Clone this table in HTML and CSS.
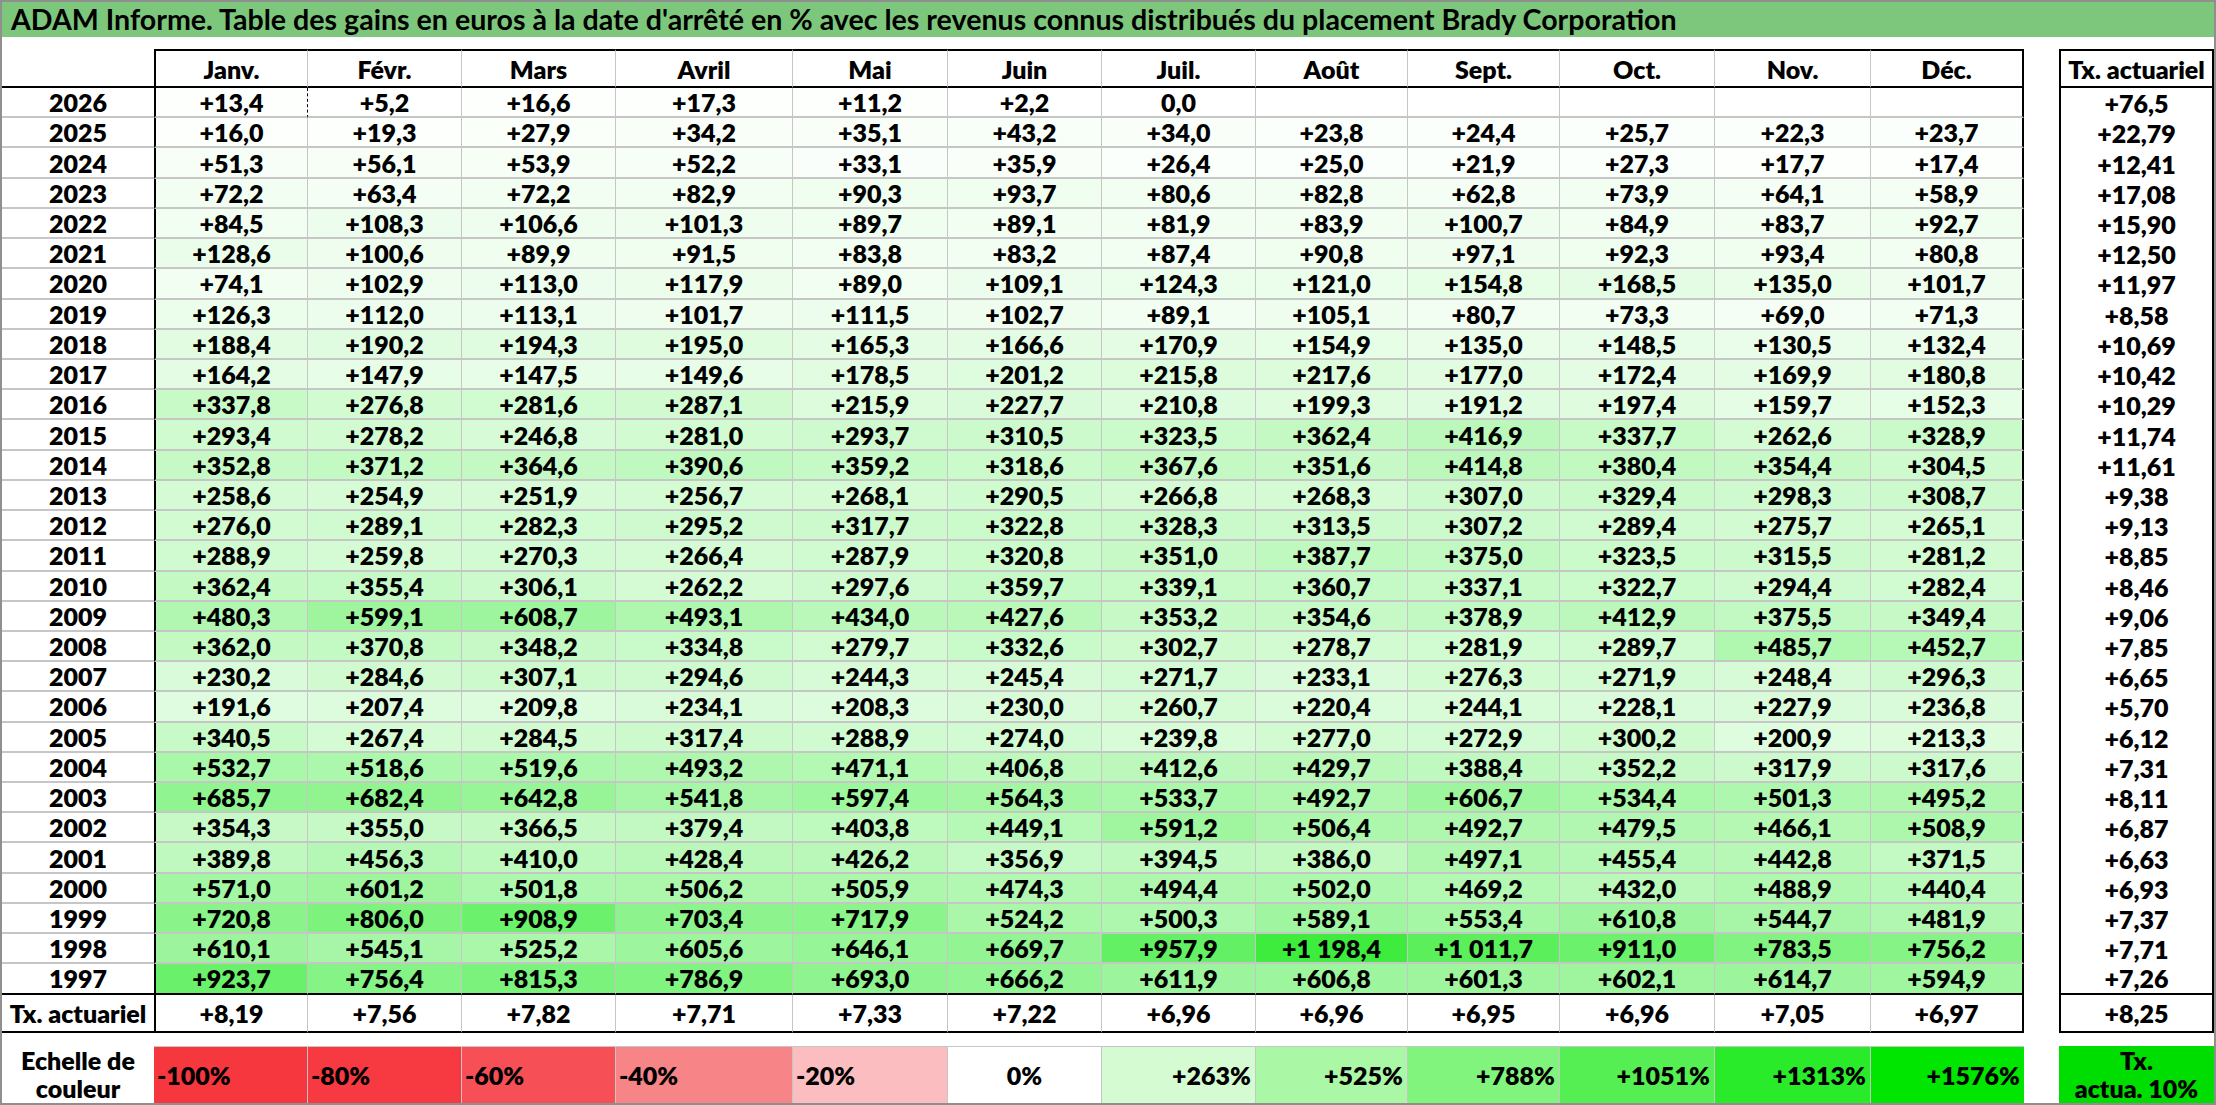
FILE: index.html
```html
<!DOCTYPE html>
<html lang="fr">
<head>
<meta charset="utf-8">
<title>ADAM Informe</title>
<link rel="stylesheet" href="styles.css">
</head>
<body>
<div class="sheet">
  <div class="title">ADAM Informe. Table des gains en euros à la date d'arrêté en % avec les revenus connus distribués du placement Brady Corporation</div>
  <div class="grid">
    <div class="row head">
      <div class="c y"></div>
      <div class="c m first">Janv.</div><div class="c m">Févr.</div><div class="c m">Mars</div><div class="c m">Avril</div><div class="c m">Mai</div><div class="c m">Juin</div><div class="c m">Juil.</div><div class="c m">Août</div><div class="c m">Sept.</div><div class="c m">Oct.</div><div class="c m">Nov.</div><div class="c m last">Déc.</div>
      <div class="c gap"></div><div class="c t">Tx. actuariel</div>
    </div>
    <div class="row data">
      <div class="c y">2026</div>
      <div class="c m v first dash">+13,4</div><div class="c m v">+5,2</div><div class="c m v">+16,6</div><div class="c m v">+17,3</div><div class="c m v">+11,2</div><div class="c m v">+2,2</div><div class="c m v">0,0</div><div class="c m v"></div><div class="c m v"></div><div class="c m v"></div><div class="c m v"></div><div class="c m v last"></div>
      <div class="c gap"></div><div class="c t">+76,5</div>
    </div>
    <div class="row data">
      <div class="c y">2025</div>
      <div class="c m v first">+16,0</div><div class="c m v">+19,3</div><div class="c m v">+27,9</div><div class="c m v">+34,2</div><div class="c m v">+35,1</div><div class="c m v">+43,2</div><div class="c m v">+34,0</div><div class="c m v">+23,8</div><div class="c m v">+24,4</div><div class="c m v">+25,7</div><div class="c m v">+22,3</div><div class="c m v last">+23,7</div>
      <div class="c gap"></div><div class="c t">+22,79</div>
    </div>
    <div class="row data">
      <div class="c y">2024</div>
      <div class="c m v first">+51,3</div><div class="c m v">+56,1</div><div class="c m v">+53,9</div><div class="c m v">+52,2</div><div class="c m v">+33,1</div><div class="c m v">+35,9</div><div class="c m v">+26,4</div><div class="c m v">+25,0</div><div class="c m v">+21,9</div><div class="c m v">+27,3</div><div class="c m v">+17,7</div><div class="c m v last">+17,4</div>
      <div class="c gap"></div><div class="c t">+12,41</div>
    </div>
    <div class="row data">
      <div class="c y">2023</div>
      <div class="c m v first">+72,2</div><div class="c m v">+63,4</div><div class="c m v">+72,2</div><div class="c m v">+82,9</div><div class="c m v">+90,3</div><div class="c m v">+93,7</div><div class="c m v">+80,6</div><div class="c m v">+82,8</div><div class="c m v">+62,8</div><div class="c m v">+73,9</div><div class="c m v">+64,1</div><div class="c m v last">+58,9</div>
      <div class="c gap"></div><div class="c t">+17,08</div>
    </div>
    <div class="row data">
      <div class="c y">2022</div>
      <div class="c m v first">+84,5</div><div class="c m v">+108,3</div><div class="c m v">+106,6</div><div class="c m v">+101,3</div><div class="c m v">+89,7</div><div class="c m v">+89,1</div><div class="c m v">+81,9</div><div class="c m v">+83,9</div><div class="c m v">+100,7</div><div class="c m v">+84,9</div><div class="c m v">+83,7</div><div class="c m v last">+92,7</div>
      <div class="c gap"></div><div class="c t">+15,90</div>
    </div>
    <div class="row data">
      <div class="c y">2021</div>
      <div class="c m v first">+128,6</div><div class="c m v">+100,6</div><div class="c m v">+89,9</div><div class="c m v">+91,5</div><div class="c m v">+83,8</div><div class="c m v">+83,2</div><div class="c m v">+87,4</div><div class="c m v">+90,8</div><div class="c m v">+97,1</div><div class="c m v">+92,3</div><div class="c m v">+93,4</div><div class="c m v last">+80,8</div>
      <div class="c gap"></div><div class="c t">+12,50</div>
    </div>
    <div class="row data">
      <div class="c y">2020</div>
      <div class="c m v first">+74,1</div><div class="c m v">+102,9</div><div class="c m v">+113,0</div><div class="c m v">+117,9</div><div class="c m v">+89,0</div><div class="c m v">+109,1</div><div class="c m v">+124,3</div><div class="c m v">+121,0</div><div class="c m v">+154,8</div><div class="c m v">+168,5</div><div class="c m v">+135,0</div><div class="c m v last">+101,7</div>
      <div class="c gap"></div><div class="c t">+11,97</div>
    </div>
    <div class="row data">
      <div class="c y">2019</div>
      <div class="c m v first">+126,3</div><div class="c m v">+112,0</div><div class="c m v">+113,1</div><div class="c m v">+101,7</div><div class="c m v">+111,5</div><div class="c m v">+102,7</div><div class="c m v">+89,1</div><div class="c m v">+105,1</div><div class="c m v">+80,7</div><div class="c m v">+73,3</div><div class="c m v">+69,0</div><div class="c m v last">+71,3</div>
      <div class="c gap"></div><div class="c t">+8,58</div>
    </div>
    <div class="row data">
      <div class="c y">2018</div>
      <div class="c m v first">+188,4</div><div class="c m v">+190,2</div><div class="c m v">+194,3</div><div class="c m v">+195,0</div><div class="c m v">+165,3</div><div class="c m v">+166,6</div><div class="c m v">+170,9</div><div class="c m v">+154,9</div><div class="c m v">+135,0</div><div class="c m v">+148,5</div><div class="c m v">+130,5</div><div class="c m v last">+132,4</div>
      <div class="c gap"></div><div class="c t">+10,69</div>
    </div>
    <div class="row data">
      <div class="c y">2017</div>
      <div class="c m v first">+164,2</div><div class="c m v">+147,9</div><div class="c m v">+147,5</div><div class="c m v">+149,6</div><div class="c m v">+178,5</div><div class="c m v">+201,2</div><div class="c m v">+215,8</div><div class="c m v">+217,6</div><div class="c m v">+177,0</div><div class="c m v">+172,4</div><div class="c m v">+169,9</div><div class="c m v last">+180,8</div>
      <div class="c gap"></div><div class="c t">+10,42</div>
    </div>
    <div class="row data">
      <div class="c y">2016</div>
      <div class="c m v first">+337,8</div><div class="c m v">+276,8</div><div class="c m v">+281,6</div><div class="c m v">+287,1</div><div class="c m v">+215,9</div><div class="c m v">+227,7</div><div class="c m v">+210,8</div><div class="c m v">+199,3</div><div class="c m v">+191,2</div><div class="c m v">+197,4</div><div class="c m v">+159,7</div><div class="c m v last">+152,3</div>
      <div class="c gap"></div><div class="c t">+10,29</div>
    </div>
    <div class="row data">
      <div class="c y">2015</div>
      <div class="c m v first">+293,4</div><div class="c m v">+278,2</div><div class="c m v">+246,8</div><div class="c m v">+281,0</div><div class="c m v">+293,7</div><div class="c m v">+310,5</div><div class="c m v">+323,5</div><div class="c m v">+362,4</div><div class="c m v">+416,9</div><div class="c m v">+337,7</div><div class="c m v">+262,6</div><div class="c m v last">+328,9</div>
      <div class="c gap"></div><div class="c t">+11,74</div>
    </div>
    <div class="row data">
      <div class="c y">2014</div>
      <div class="c m v first">+352,8</div><div class="c m v">+371,2</div><div class="c m v">+364,6</div><div class="c m v">+390,6</div><div class="c m v">+359,2</div><div class="c m v">+318,6</div><div class="c m v">+367,6</div><div class="c m v">+351,6</div><div class="c m v">+414,8</div><div class="c m v">+380,4</div><div class="c m v">+354,4</div><div class="c m v last">+304,5</div>
      <div class="c gap"></div><div class="c t">+11,61</div>
    </div>
    <div class="row data">
      <div class="c y">2013</div>
      <div class="c m v first">+258,6</div><div class="c m v">+254,9</div><div class="c m v">+251,9</div><div class="c m v">+256,7</div><div class="c m v">+268,1</div><div class="c m v">+290,5</div><div class="c m v">+266,8</div><div class="c m v">+268,3</div><div class="c m v">+307,0</div><div class="c m v">+329,4</div><div class="c m v">+298,3</div><div class="c m v last">+308,7</div>
      <div class="c gap"></div><div class="c t">+9,38</div>
    </div>
    <div class="row data">
      <div class="c y">2012</div>
      <div class="c m v first">+276,0</div><div class="c m v">+289,1</div><div class="c m v">+282,3</div><div class="c m v">+295,2</div><div class="c m v">+317,7</div><div class="c m v">+322,8</div><div class="c m v">+328,3</div><div class="c m v">+313,5</div><div class="c m v">+307,2</div><div class="c m v">+289,4</div><div class="c m v">+275,7</div><div class="c m v last">+265,1</div>
      <div class="c gap"></div><div class="c t">+9,13</div>
    </div>
    <div class="row data">
      <div class="c y">2011</div>
      <div class="c m v first">+288,9</div><div class="c m v">+259,8</div><div class="c m v">+270,3</div><div class="c m v">+266,4</div><div class="c m v">+287,9</div><div class="c m v">+320,8</div><div class="c m v">+351,0</div><div class="c m v">+387,7</div><div class="c m v">+375,0</div><div class="c m v">+323,5</div><div class="c m v">+315,5</div><div class="c m v last">+281,2</div>
      <div class="c gap"></div><div class="c t">+8,85</div>
    </div>
    <div class="row data">
      <div class="c y">2010</div>
      <div class="c m v first">+362,4</div><div class="c m v">+355,4</div><div class="c m v">+306,1</div><div class="c m v">+262,2</div><div class="c m v">+297,6</div><div class="c m v">+359,7</div><div class="c m v">+339,1</div><div class="c m v">+360,7</div><div class="c m v">+337,1</div><div class="c m v">+322,7</div><div class="c m v">+294,4</div><div class="c m v last">+282,4</div>
      <div class="c gap"></div><div class="c t">+8,46</div>
    </div>
    <div class="row data">
      <div class="c y">2009</div>
      <div class="c m v first">+480,3</div><div class="c m v">+599,1</div><div class="c m v">+608,7</div><div class="c m v">+493,1</div><div class="c m v">+434,0</div><div class="c m v">+427,6</div><div class="c m v">+353,2</div><div class="c m v">+354,6</div><div class="c m v">+378,9</div><div class="c m v">+412,9</div><div class="c m v">+375,5</div><div class="c m v last">+349,4</div>
      <div class="c gap"></div><div class="c t">+9,06</div>
    </div>
    <div class="row data">
      <div class="c y">2008</div>
      <div class="c m v first">+362,0</div><div class="c m v">+370,8</div><div class="c m v">+348,2</div><div class="c m v">+334,8</div><div class="c m v">+279,7</div><div class="c m v">+332,6</div><div class="c m v">+302,7</div><div class="c m v">+278,7</div><div class="c m v">+281,9</div><div class="c m v">+289,7</div><div class="c m v">+485,7</div><div class="c m v last">+452,7</div>
      <div class="c gap"></div><div class="c t">+7,85</div>
    </div>
    <div class="row data">
      <div class="c y">2007</div>
      <div class="c m v first">+230,2</div><div class="c m v">+284,6</div><div class="c m v">+307,1</div><div class="c m v">+294,6</div><div class="c m v">+244,3</div><div class="c m v">+245,4</div><div class="c m v">+271,7</div><div class="c m v">+233,1</div><div class="c m v">+276,3</div><div class="c m v">+271,9</div><div class="c m v">+248,4</div><div class="c m v last">+296,3</div>
      <div class="c gap"></div><div class="c t">+6,65</div>
    </div>
    <div class="row data">
      <div class="c y">2006</div>
      <div class="c m v first">+191,6</div><div class="c m v">+207,4</div><div class="c m v">+209,8</div><div class="c m v">+234,1</div><div class="c m v">+208,3</div><div class="c m v">+230,0</div><div class="c m v">+260,7</div><div class="c m v">+220,4</div><div class="c m v">+244,1</div><div class="c m v">+228,1</div><div class="c m v">+227,9</div><div class="c m v last">+236,8</div>
      <div class="c gap"></div><div class="c t">+5,70</div>
    </div>
    <div class="row data">
      <div class="c y">2005</div>
      <div class="c m v first">+340,5</div><div class="c m v">+267,4</div><div class="c m v">+284,5</div><div class="c m v">+317,4</div><div class="c m v">+288,9</div><div class="c m v">+274,0</div><div class="c m v">+239,8</div><div class="c m v">+277,0</div><div class="c m v">+272,9</div><div class="c m v">+300,2</div><div class="c m v">+200,9</div><div class="c m v last">+213,3</div>
      <div class="c gap"></div><div class="c t">+6,12</div>
    </div>
    <div class="row data">
      <div class="c y">2004</div>
      <div class="c m v first">+532,7</div><div class="c m v">+518,6</div><div class="c m v">+519,6</div><div class="c m v">+493,2</div><div class="c m v">+471,1</div><div class="c m v">+406,8</div><div class="c m v">+412,6</div><div class="c m v">+429,7</div><div class="c m v">+388,4</div><div class="c m v">+352,2</div><div class="c m v">+317,9</div><div class="c m v last">+317,6</div>
      <div class="c gap"></div><div class="c t">+7,31</div>
    </div>
    <div class="row data">
      <div class="c y">2003</div>
      <div class="c m v first">+685,7</div><div class="c m v">+682,4</div><div class="c m v">+642,8</div><div class="c m v">+541,8</div><div class="c m v">+597,4</div><div class="c m v">+564,3</div><div class="c m v">+533,7</div><div class="c m v">+492,7</div><div class="c m v">+606,7</div><div class="c m v">+534,4</div><div class="c m v">+501,3</div><div class="c m v last">+495,2</div>
      <div class="c gap"></div><div class="c t">+8,11</div>
    </div>
    <div class="row data">
      <div class="c y">2002</div>
      <div class="c m v first">+354,3</div><div class="c m v">+355,0</div><div class="c m v">+366,5</div><div class="c m v">+379,4</div><div class="c m v">+403,8</div><div class="c m v">+449,1</div><div class="c m v">+591,2</div><div class="c m v">+506,4</div><div class="c m v">+492,7</div><div class="c m v">+479,5</div><div class="c m v">+466,1</div><div class="c m v last">+508,9</div>
      <div class="c gap"></div><div class="c t">+6,87</div>
    </div>
    <div class="row data">
      <div class="c y">2001</div>
      <div class="c m v first">+389,8</div><div class="c m v">+456,3</div><div class="c m v">+410,0</div><div class="c m v">+428,4</div><div class="c m v">+426,2</div><div class="c m v">+356,9</div><div class="c m v">+394,5</div><div class="c m v">+386,0</div><div class="c m v">+497,1</div><div class="c m v">+455,4</div><div class="c m v">+442,8</div><div class="c m v last">+371,5</div>
      <div class="c gap"></div><div class="c t">+6,63</div>
    </div>
    <div class="row data">
      <div class="c y">2000</div>
      <div class="c m v first">+571,0</div><div class="c m v">+601,2</div><div class="c m v">+501,8</div><div class="c m v">+506,2</div><div class="c m v">+505,9</div><div class="c m v">+474,3</div><div class="c m v">+494,4</div><div class="c m v">+502,0</div><div class="c m v">+469,2</div><div class="c m v">+432,0</div><div class="c m v">+488,9</div><div class="c m v last">+440,4</div>
      <div class="c gap"></div><div class="c t">+6,93</div>
    </div>
    <div class="row data">
      <div class="c y">1999</div>
      <div class="c m v first">+720,8</div><div class="c m v">+806,0</div><div class="c m v">+908,9</div><div class="c m v">+703,4</div><div class="c m v">+717,9</div><div class="c m v">+524,2</div><div class="c m v">+500,3</div><div class="c m v">+589,1</div><div class="c m v">+553,4</div><div class="c m v">+610,8</div><div class="c m v">+544,7</div><div class="c m v last">+481,9</div>
      <div class="c gap"></div><div class="c t">+7,37</div>
    </div>
    <div class="row data">
      <div class="c y">1998</div>
      <div class="c m v first">+610,1</div><div class="c m v">+545,1</div><div class="c m v">+525,2</div><div class="c m v">+605,6</div><div class="c m v">+646,1</div><div class="c m v">+669,7</div><div class="c m v">+957,9</div><div class="c m v">+1 198,4</div><div class="c m v">+1 011,7</div><div class="c m v">+911,0</div><div class="c m v">+783,5</div><div class="c m v last">+756,2</div>
      <div class="c gap"></div><div class="c t">+7,71</div>
    </div>
    <div class="row data end">
      <div class="c y">1997</div>
      <div class="c m v first">+923,7</div><div class="c m v">+756,4</div><div class="c m v">+815,3</div><div class="c m v">+786,9</div><div class="c m v">+693,0</div><div class="c m v">+666,2</div><div class="c m v">+611,9</div><div class="c m v">+606,8</div><div class="c m v">+601,3</div><div class="c m v">+602,1</div><div class="c m v">+614,7</div><div class="c m v last">+594,9</div>
      <div class="c gap"></div><div class="c t">+7,26</div>
    </div>
    <div class="row total">
      <div class="c y">Tx. actuariel</div>
      <div class="c m first">+8,19</div><div class="c m">+7,56</div><div class="c m">+7,82</div><div class="c m">+7,71</div><div class="c m">+7,33</div><div class="c m">+7,22</div><div class="c m">+6,96</div><div class="c m">+6,96</div><div class="c m">+6,95</div><div class="c m">+6,96</div><div class="c m">+7,05</div><div class="c m last">+6,97</div>
      <div class="c gap"></div><div class="c t">+8,25</div>
    </div>
    <div class="row legend">
      <div class="c y two">Echelle de<br>couleur</div>
      <div class="c k neg n100">-100%</div><div class="c k neg n80">-80%</div><div class="c k neg n60">-60%</div><div class="c k neg n40">-40%</div><div class="c k neg n20">-20%</div><div class="c k zero">0%</div><div class="c k pos p1">+263%</div><div class="c k pos p2">+525%</div><div class="c k pos p3">+788%</div><div class="c k pos p4">+1051%</div><div class="c k pos p5">+1313%</div><div class="c k pos p6 last">+1576%</div>
      <div class="c gap"></div><div class="c two tx10">Tx.<br>actua. 10%</div>
    </div>
  </div>
</div>
<script src="script.js"></script>
</body>
</html>
```

FILE: styles.css
```css
html, body {
  margin: 0;
  padding: 0;
  background: #ffffff;
}

.sheet {
  box-sizing: border-box;
  width: 2216px;
  height: 1105px;
  border: 2px solid #8f8f8f;
  background: #ffffff;
  font-family: Lato, "Open Sans", "Liberation Sans", sans-serif;
  font-weight: 800;
  color: #000000;
  overflow: hidden;
}

.title {
  height: 35px;
  background: #7dc77d;
  font-size: 28.6px;
  font-weight: 700;
  line-height: 35px;
  padding-left: 9px;
  white-space: nowrap;
}

.grid {
  margin-top: 12px;
}

.row {
  display: grid;
  grid-template-columns: 152px 154px 154px 154px 177px 155px 154px 154px 152px 152px 155px 156px 153px 35px 155px;
}

.head { height: 39px; }
.data { height: 30.233px; }
.total { height: 38px; }
.legend { height: 57px; margin-top: 13px; }

.c {
  box-sizing: border-box;
  display: flex;
  align-items: center;
  justify-content: center;
  font-size: 25px;
  white-space: nowrap;
  overflow: hidden;
}

/* month cells */
.m {
  border-right: 1px solid #c6c6c6;
  border-bottom: 2px solid #c6c6c6;
  background: #ffffff;
}
.m.first { border-left: 2px solid #000000; }
.m.last { border-right: 2px solid #000000; }
.m.dash { border-right: 1px dashed #000000; }

/* year column */
.y { border-bottom: 2px solid #c6c6c6; }

/* actuarial column */
.t {
  border-left: 2px solid #000000;
  border-right: 2px solid #000000;
}

/* header row */
.head .m,
.head .t {
  border-top: 2px solid #000000;
  border-bottom: 2px solid #000000;
}
.head .y { border-bottom: 2px solid #000000; }

/* last data row and totals row */
.end .y,
.end .m,
.end .t,
.total .y,
.total .m,
.total .t {
  border-bottom: 2px solid #000000;
}

/* legend */
.legend .y { border-bottom: none; }
.two {
  flex-direction: column;
  line-height: 28px;
  text-align: center;
}
.k {
  border-top: 1px solid #c6c6c6;
  border-right: 1px solid #c6c6c6;
}
.k.last { border-right: none; }
.neg { justify-content: flex-start; padding-left: 3px; }
.pos { justify-content: flex-end; padding-right: 4px; }
.zero { background: #ffffff; }
.n100 { background: #f7373e; }
.n80 { background: #f73a41; }
.n60 { background: #f64f55; }
.n40 { background: #f78487; }
.n20 { background: #fbbdbf; }
.p1 { background: #d5fbd3; }
.p2 { background: #aaf7a6; }
.p3 { background: #80f47c; }
.p4 { background: #55ef53; }
.p5 { background: #2aeb2a; }
.p6 { background: #00e600; }
.tx10 { background: #00dd00; }
```

FILE: script.js
```js
// Colour each gain cell on the white → green scale used by the legend (0 → +1576).
document.querySelectorAll('.v').forEach(function (cell) {
  var txt = cell.textContent.replace(/\s/g, '').replace('+', '').replace(',', '.');
  if (txt === '') return;
  var n = parseFloat(txt);
  if (isNaN(n)) return;
  var t = Math.max(0, Math.min(1, n / 1576));
  var rb = Math.round(255 - 255 * t);
  var g = Math.round(255 - 25 * t);
  cell.style.backgroundColor = 'rgb(' + rb + ',' + g + ',' + rb + ')';
});
```
